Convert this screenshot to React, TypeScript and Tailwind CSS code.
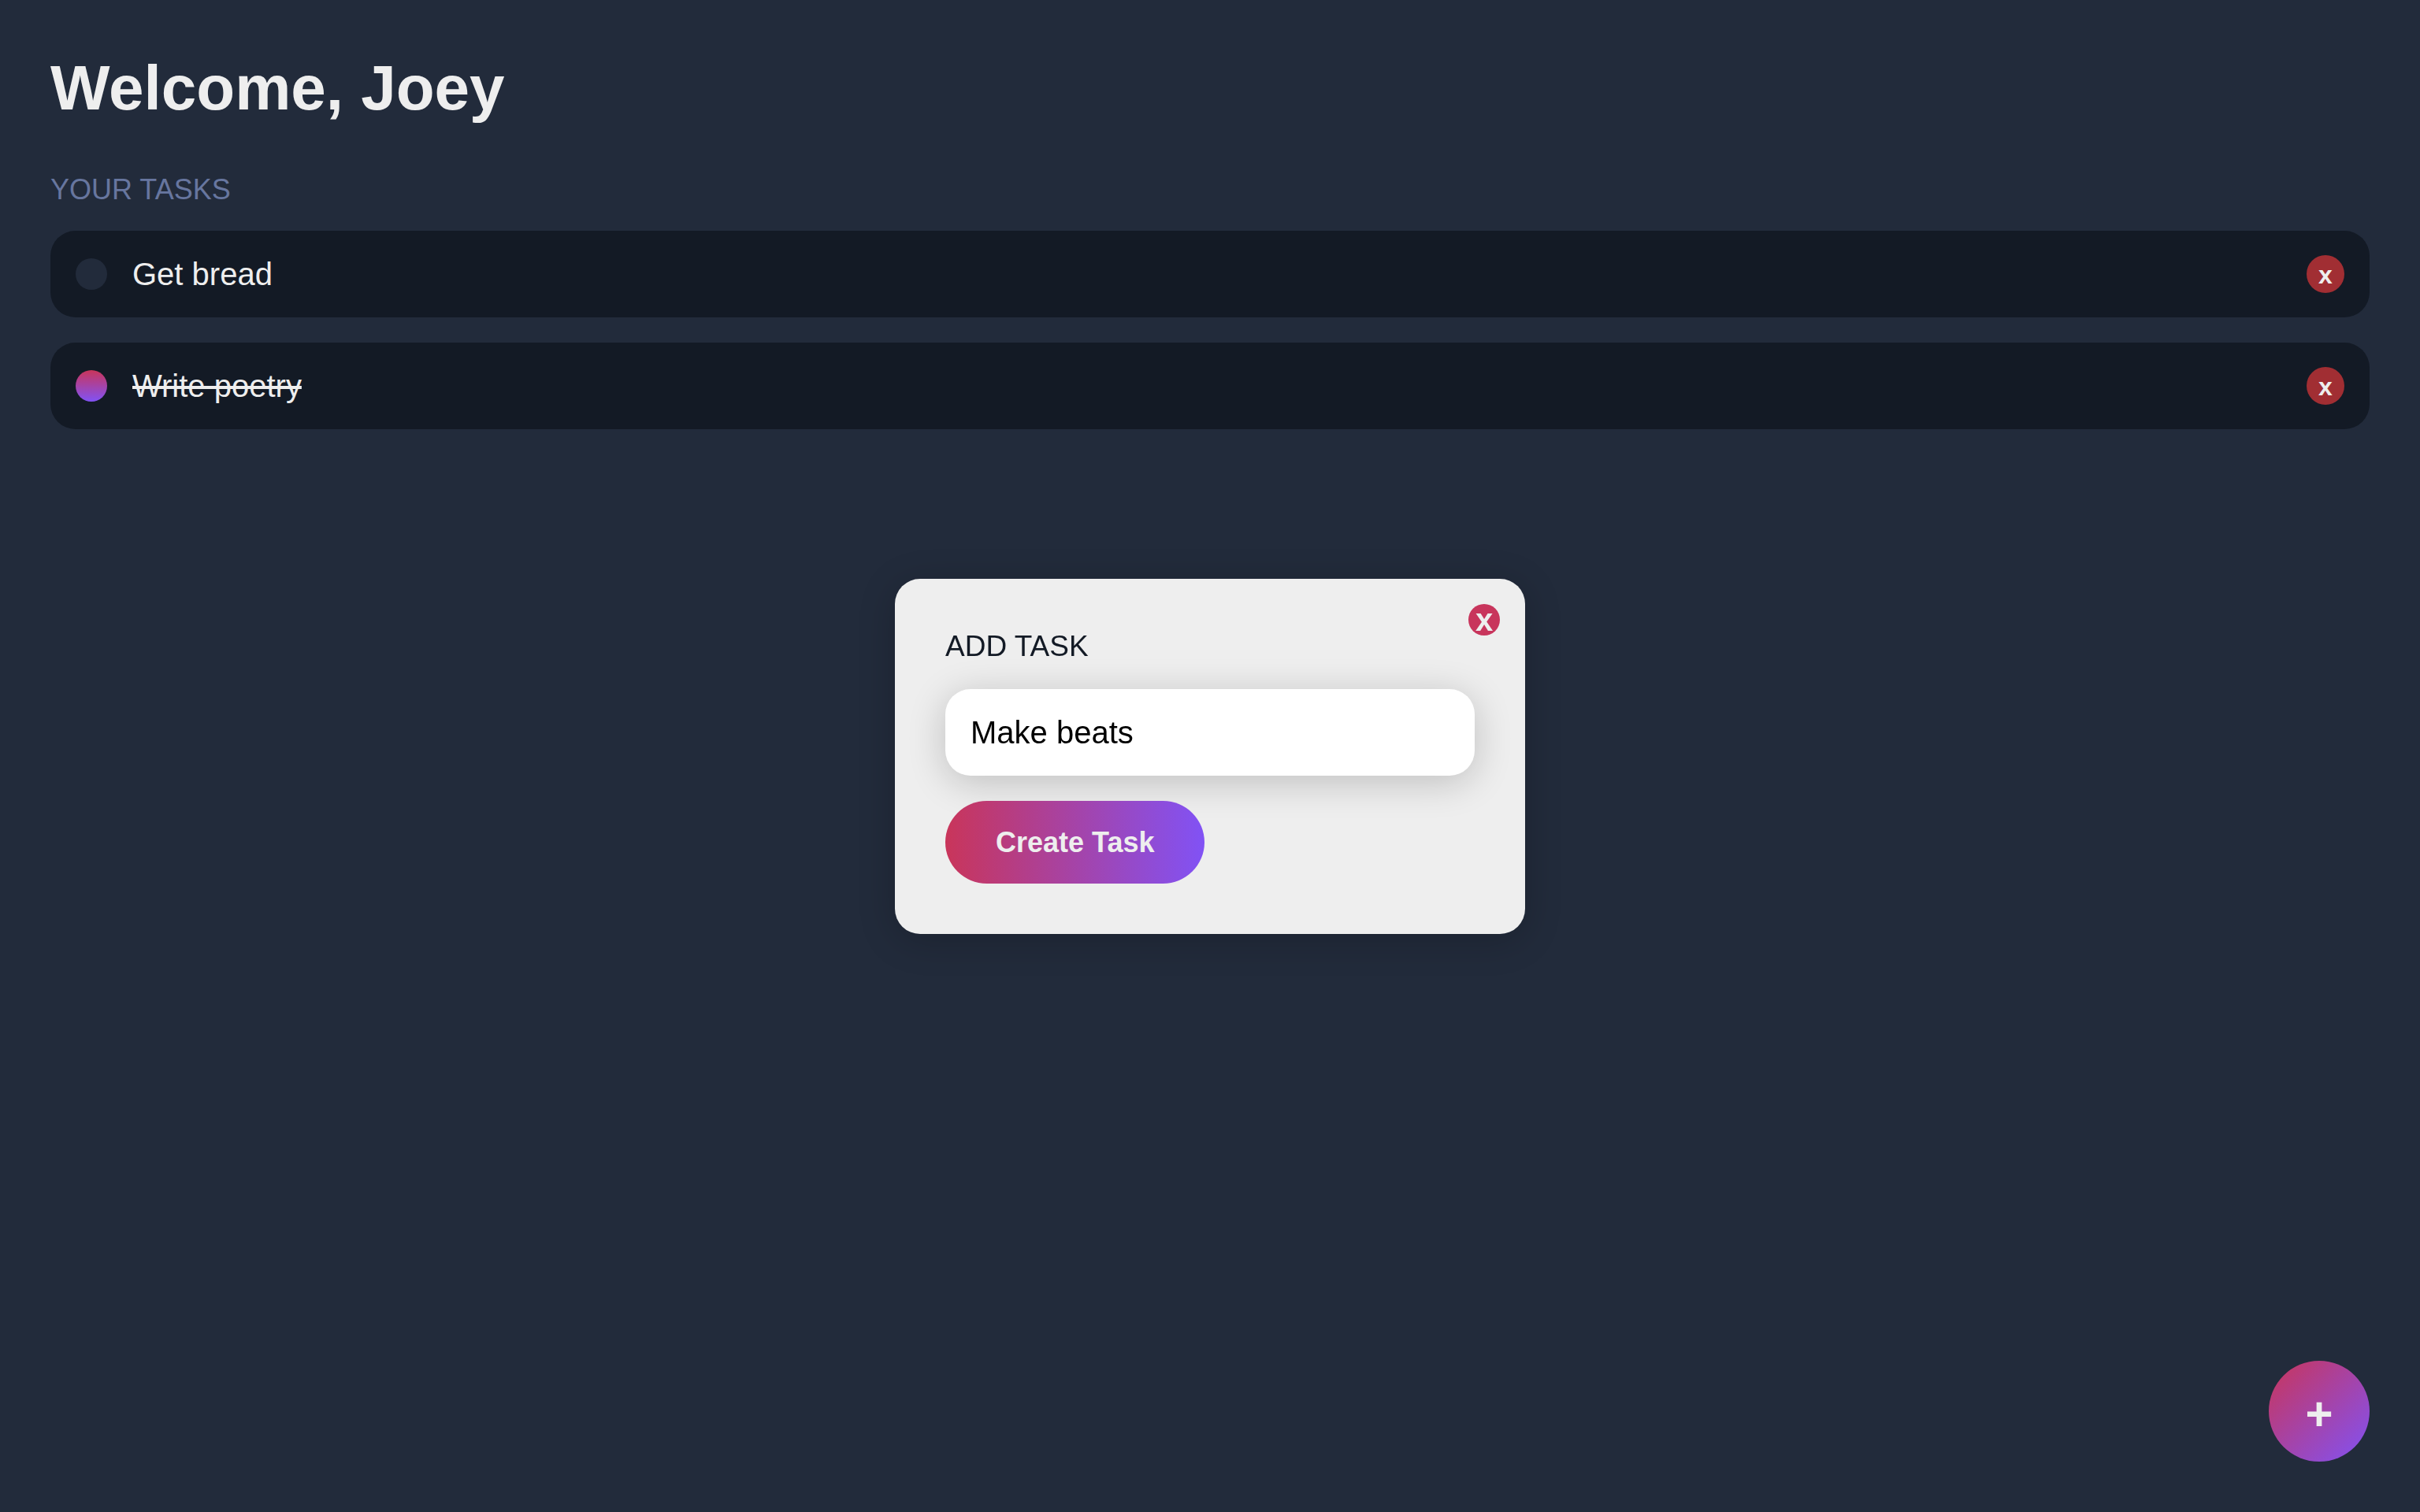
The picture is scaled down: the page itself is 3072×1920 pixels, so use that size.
import { useState } from "react";

type Task = { id: number; text: string; complete: boolean };

const initialTasks: Task[] = [
  { id: 1, text: "Get bread", complete: false },
  { id: 2, text: "Write poetry", complete: true },
];

function TaskRow({
  task,
  onToggle,
  onDelete,
}: {
  task: Task;
  onToggle: () => void;
  onDelete: () => void;
}) {
  return (
    <li className="flex items-center rounded-[32px] bg-[#131a25] p-8">
      <label className="flex flex-1 cursor-pointer items-center gap-8">
        <input
          type="checkbox"
          checked={task.complete}
          onChange={onToggle}
          className="size-10 appearance-none rounded-full bg-[#222b3b] checked:bg-[linear-gradient(to_bottom,#c9355a,#8152f5)]"
        />
        <span
          className={
            task.complete
              ? "text-[40px] leading-[46px] line-through decoration-4"
              : "text-[40px] leading-[46px]"
          }
        >
          {task.text}
        </span>
      </label>
      <button
        type="button"
        aria-label={`Delete ${task.text}`}
        onClick={onDelete}
        className="-my-px flex size-12 items-center justify-center rounded-full bg-[#a12e33] pt-0.5 text-[32px] leading-none font-bold"
      >
        x
      </button>
    </li>
  );
}

export default function App() {
  const [tasks, setTasks] = useState(initialTasks);
  const [open, setOpen] = useState(true);
  const [text, setText] = useState("Make beats");

  const createTask = () => {
    setTasks([...tasks, { id: Date.now(), text, complete: false }]);
    setText("");
    setOpen(false);
  };

  return (
    <main className="min-h-screen bg-[#222b3b] p-16 font-['Liberation_Sans',Arial,sans-serif] text-[#eeeeee]">
      <h1 className="mb-[60px] text-[80px] leading-[95px] font-bold">Welcome, Joey</h1>
      <h2 className="mb-[30px] text-[36px] leading-[44px] text-[#67769f] uppercase">Your tasks</h2>
      <ul className="flex flex-col gap-8">
        {tasks.map((task) => (
          <TaskRow
            key={task.id}
            task={task}
            onToggle={() =>
              setTasks(tasks.map((t) => (t.id === task.id ? { ...t, complete: !t.complete } : t)))
            }
            onDelete={() => setTasks(tasks.filter((t) => t.id !== task.id))}
          />
        ))}
      </ul>

      <button
        type="button"
        aria-label="Add task"
        onClick={() => setOpen(true)}
        className="fixed right-16 bottom-16 flex size-32 items-center justify-center rounded-full bg-[linear-gradient(135deg,#c9355a,#8152f5)] pt-2 text-[60px] leading-none font-bold"
      >
        +
      </button>

      {open && (
        <div className="pointer-events-none fixed inset-0 flex items-center justify-center">
          <form
            role="dialog"
            aria-labelledby="add-task-label"
            onSubmit={(e) => {
              e.preventDefault();
              createTask();
            }}
            className="pointer-events-auto relative flex w-full max-w-[800px] flex-col items-start gap-8 rounded-[32px] bg-[#eeeeee] p-16 shadow-[0_8px_48px_rgba(0,0,0,0.2)]"
          >
            <button
              type="button"
              aria-label="Close"
              onClick={() => setOpen(false)}
              className="absolute top-8 right-8 flex size-10 items-center justify-center rounded-full bg-[#c8355c] text-[40px] leading-none font-bold"
            >
              x
            </button>
            <label
              id="add-task-label"
              htmlFor="new-task"
              className="text-[37px] leading-[44px] text-[#131a25] uppercase"
            >
              Add task
            </label>
            <input
              id="new-task"
              type="text"
              value={text}
              onChange={(e) => setText(e.target.value)}
              className="w-full rounded-[32px] bg-white p-8 text-[40px] leading-[46px] text-black shadow-[0_8px_48px_rgba(0,0,0,0.2)] outline-none"
            />
            <button
              type="submit"
              className="relative rounded-full bg-[linear-gradient(to_right,#c9355a,#8152f5)] px-16 py-8 text-[36px] leading-[41px] font-bold"
            >
              Create Task
            </button>
          </form>
        </div>
      )}
    </main>
  );
}
